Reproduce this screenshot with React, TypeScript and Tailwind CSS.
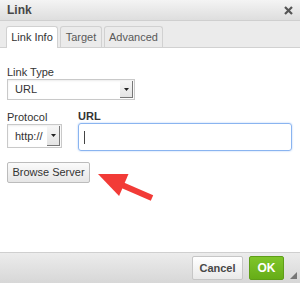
import React from 'react'

const font = { fontFamily: '"Liberation Sans", Arial, sans-serif' }

function SelectBox({ value, className }: { value: string; className: string }) {
    return (
        <div className={`flex items-stretch border border-[#c9c9c9] bg-white shadow-[inset_0_1px_2px_rgba(0,0,0,0.08)] ${className}`}>
            <div className="flex-1 flex items-center pl-[7px] text-[11px] text-[#333]">{value}</div>
            <div className="w-[13px] my-[1px] mr-[1px] flex items-center justify-center bg-gradient-to-b from-[#f6f6f6] to-[#e4e4e4] border-r border-b border-[#777]">
                <svg width="5" height="3" viewBox="0 0 5 3"><path d="M0 0h5L2.5 3z" fill="#222" /></svg>
            </div>
        </div>
    )
}

const App = () => {
    return (
        <div className="w-[300px] h-[283px] flex flex-col bg-white overflow-hidden" style={font}>
            {/* title */}
            <div className="h-[21px] flex items-center justify-between pl-[7px] pr-[6px] bg-gradient-to-b from-[#f4f4f4] to-[#dedede] border-b border-[#cfcfcf]">
                <span className="text-[12px] font-bold text-[#474747]">Link</span>
                <svg width="9" height="9" viewBox="0 0 9 9" className="mr-[1px]">
                    <path d="M1 1l7 7M8 1L1 8" stroke="#555" strokeWidth="2.2" />
                </svg>
            </div>

            {/* tabs */}
            <div className="h-[27px] flex items-end gap-[2px] pl-[6px] bg-[#ebebeb] border-b border-[#d1d1d1]">
                <div className="h-[22px] w-[52px] flex items-center justify-center bg-white border border-b-0 border-[#d1d1d1] rounded-t-[3px] text-[11px] text-[#333] mb-[-1px]">Link Info</div>
                <div className="h-[21px] w-[42px] flex items-center justify-center bg-[#ebebeb] border border-b-0 border-[#d1d1d1] rounded-t-[3px] text-[11px] text-[#595959]">Target</div>
                <div className="h-[21px] w-[59px] flex items-center justify-center bg-[#ebebeb] border border-b-0 border-[#d1d1d1] rounded-t-[3px] text-[11px] text-[#595959]">Advanced</div>
            </div>

            {/* body */}
            <div className="flex-1 relative px-[7px] pt-[17px]">
                <div className="text-[11px] text-[#333] leading-[14px]">Link Type</div>
                <SelectBox value="URL" className="w-[128px] h-[21px]" />

                <div className="mt-[10px] flex gap-[16px]">
                    <div className="flex flex-col">
                        <div className="text-[11px] text-[#333] leading-[14px]">Protocol</div>
                        <SelectBox value="http://" className="w-[55px] h-[24px]" />
                    </div>
                    <div className="flex-1 flex flex-col">
                        <div className="text-[11px] font-bold text-[#333] leading-[13px]">URL</div>
                        <div className="h-[28px] mr-[1px] border border-[#8ab4f0] rounded-[3px] shadow-[0_0_2px_#a9c9f7] flex items-center pl-[5px]">
                            <div className="w-[1px] h-[13px] bg-[#444]" />
                        </div>
                    </div>
                </div>

                <button className="mt-[11px] w-[83px] h-[21px] flex items-center justify-center rounded-[2px] border border-[#bcbcbc] bg-gradient-to-b from-[#fbfbfb] to-[#e6e6e6] text-[11px] text-[#333]">
                    Browse Server
                </button>

                {/* annotation arrow */}
                <svg className="absolute left-[92px] top-[117px]" width="66" height="40" viewBox="0 0 66 40">
                    <path d="M60 33L30 20" stroke="#f23b37" strokeWidth="6" />
                    <path d="M6 9L36.5 8.9L27.1 30.9z" fill="#f23b37" />
                </svg>
            </div>

            {/* footer */}
            <div className="h-[31px] flex items-center justify-end gap-[6px] pr-[16px] bg-gradient-to-b from-[#ececec] to-[#d7d7d7] border-t border-[#cfcfcf] relative">
                <button className="w-[51px] h-[24px] rounded-[2px] border border-[#c6c6c6] bg-gradient-to-b from-[#ffffff] to-[#e9e9e9] text-[11px] font-bold text-[#474747]">Cancel</button>
                <button className="w-[35px] h-[24px] rounded-[2px] border border-[#5e9e18] bg-gradient-to-b from-[#7fc52a] to-[#66ad17] text-[12px] font-bold text-white">OK</button>
                <svg className="absolute right-[3px] bottom-[4px]" width="7" height="7" viewBox="0 0 7 7"><path d="M7 0V7H0z" fill="#777" /></svg>
            </div>
        </div>
    )
}

export default App
